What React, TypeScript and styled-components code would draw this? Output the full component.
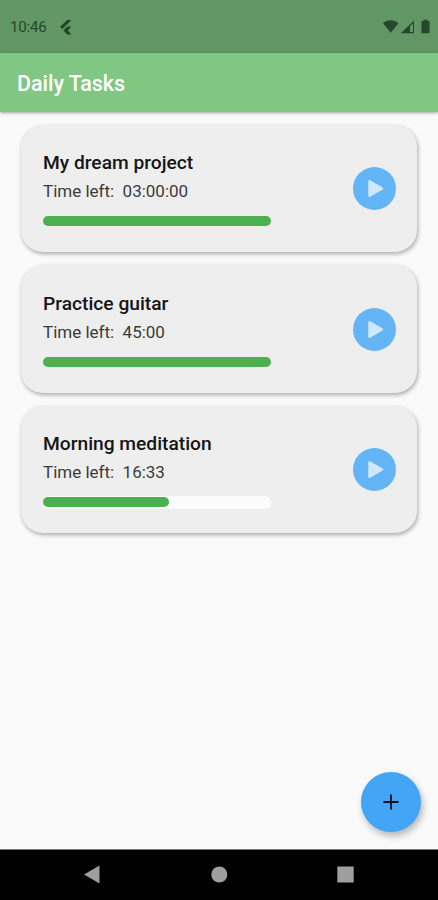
import React from "react";
import styled, { createGlobalStyle } from "styled-components";

const GlobalStyle = createGlobalStyle`
  * { box-sizing: border-box; }
  body { margin: 0; background: #fafafa; font-family: Roboto, sans-serif; }
`;

const Screen = styled.div`
  width: 438px;
  height: 900px;
  display: flex;
  flex-direction: column;
  background: #fafafa;
  overflow: hidden;
`;

const StatusBar = styled.header`
  height: 53px;
  flex: none;
  display: flex;
  align-items: center;
  padding: 1px 7px 0 10px;
  background: #629664;
  color: #26472a;
`;

const Clock = styled.span`
  width: 49px;
  font-size: 15px;
  line-height: 20px;
  letter-spacing: -0.15px;
`;

const StatusIcons = styled.div`
  margin-left: auto;
  display: flex;
`;

const AppBar = styled.div`
  height: 59px;
  flex: none;
  display: flex;
  align-items: center;
  padding: 2px 17px 0;
  background: #81c784;
  box-shadow: 0 1px 3px rgba(0, 0, 0, 0.35);
`;

const AppTitle = styled.h1`
  margin: 0;
  color: #fff;
  font-size: 21.5px;
  font-weight: 500;
  letter-spacing: -0.05px;
`;

const TaskList = styled.main`
  flex: 1;
  display: flex;
  flex-direction: column;
  gap: 13px;
  padding: 12.75px 21px 0;
`;

const TaskCard = styled.article`
  height: 127.5px;
  flex: none;
  display: flex;
  align-items: center;
  justify-content: space-between;
  padding: 0 21px 0 22px;
  border-radius: 22px;
  background: #eee;
  box-shadow: 1px 2px 4px rgba(0, 0, 0, 0.32);
`;

const TaskInfo = styled.div`
  width: 228px;
  height: 79px;
  display: flex;
  flex-direction: column;
`;

const TaskName = styled.h2`
  margin: 0;
  color: #151515;
  font-size: 19.2px;
  line-height: 28px;
  font-weight: 500;
  letter-spacing: 0;
`;

const TimeLeft = styled.p`
  margin: 0;
  color: #3b3b3b;
  font-size: 17px;
  line-height: 29px;
  letter-spacing: 0;
  white-space: pre;
`;

const Track = styled.div<{ $inProgress: boolean }>`
  height: 13px;
  margin-top: 9px;
  padding-top: 1px;
  border-radius: 6px;
  background: ${({ $inProgress }) => ($inProgress ? "#fbfbfb" : "transparent")};
`;

const Progress = styled.div`
  height: 10px;
  border-radius: 5px;
  background: #4caf50;
`;

const PlayButton = styled.button`
  width: 43px;
  height: 43px;
  padding: 0;
  border: 0;
  border-radius: 50%;
  background: #64b5f6;
  svg { display: block; }
`;

const FabRow = styled.div`
  height: 77px;
  flex: none;
  display: flex;
  justify-content: flex-end;
  padding-right: 17px;
`;

const AddButton = styled.button`
  width: 60px;
  height: 60px;
  display: flex;
  align-items: center;
  justify-content: center;
  padding: 0;
  border: 0;
  border-radius: 50%;
  background: #42a5f5;
  box-shadow: 2px 4px 7px rgba(0, 0, 0, 0.28);
`;

const NavigationBar = styled.nav`
  height: 51px;
  flex: none;
  background: #000;
  border-top: 1px solid #777;
  svg { display: block; }
`;

const tasks = [
  { name: "My dream project", time: "03:00:00", progress: 100 },
  { name: "Practice guitar", time: "45:00", progress: 100 },
  { name: "Morning meditation", time: "16:33", progress: 55.3 },
];

export default function App() {
  return (
    <>
      <GlobalStyle />
      <Screen>
        <StatusBar>
          <Clock>10:46</Clock>
          <svg width="14" height="17" viewBox="0 0 14 17" fill="#204525">
            <path d="M8.3 1H12.4L3.4 10.1 1 7.8zM8.3 7.6h4.1L8.9 11.4l3.5 4.1H8.3L4.3 11.4z" />
          </svg>
          <StatusIcons>
            <svg width="49" height="16" viewBox="0 0 49 16" fill="#25482a">
              <path d="M1 4.2C5 .2 12.5.2 16.5 4.2L8.7 13.7z" />
              <path d="M32 1.5V14.2H18.8z" />
              <path d="M28 7.3 31 4.3V13H28z" fill="#629664" />
              <path d="M41.5 2V.8h4V2h1.2q.9 0 .9.9v10.4q0 .9-.9.9h-6.4q-.9 0-.9-.9V2.9q0-.9.9-.9z" />
            </svg>
          </StatusIcons>
        </StatusBar>
        <AppBar>
          <AppTitle>Daily Tasks</AppTitle>
        </AppBar>
        <TaskList>
          {tasks.map((task) => (
            <TaskCard key={task.name}>
              <TaskInfo>
                <TaskName>{task.name}</TaskName>
                <TimeLeft>{`Time left:  ${task.time}`}</TimeLeft>
                <Track $inProgress={task.progress < 100}>
                  <Progress style={{ width: `${task.progress}%` }} />
                </Track>
              </TaskInfo>
              <PlayButton aria-label={`Start ${task.name}`}>
                <svg width="43" height="43" viewBox="0 0 43 43">
                  <path d="M16.5 14.3v14.4L29 21.5z" fill="#d0e8fc" stroke="#d0e8fc" strokeWidth="2.5" strokeLinejoin="round" />
                </svg>
              </PlayButton>
            </TaskCard>
          ))}
        </TaskList>
        <FabRow>
          <AddButton aria-label="Add task">
            <svg width="18" height="18" viewBox="0 0 18 18" stroke="#081520" strokeWidth="2">
              <path d="M9 1.5v15M1.5 9h15" />
            </svg>
          </AddButton>
        </FabRow>
        <NavigationBar>
          <svg width="438" height="50" viewBox="0 0 438 50" fill="#9e9e9e">
            <path d="M84 24.5 99.5 15.5V33.5z" />
            <circle cx="219.3" cy="24.5" r="8" />
            <rect x="337.3" y="16.5" width="16.4" height="16" />
          </svg>
        </NavigationBar>
      </Screen>
    </>
  );
}
